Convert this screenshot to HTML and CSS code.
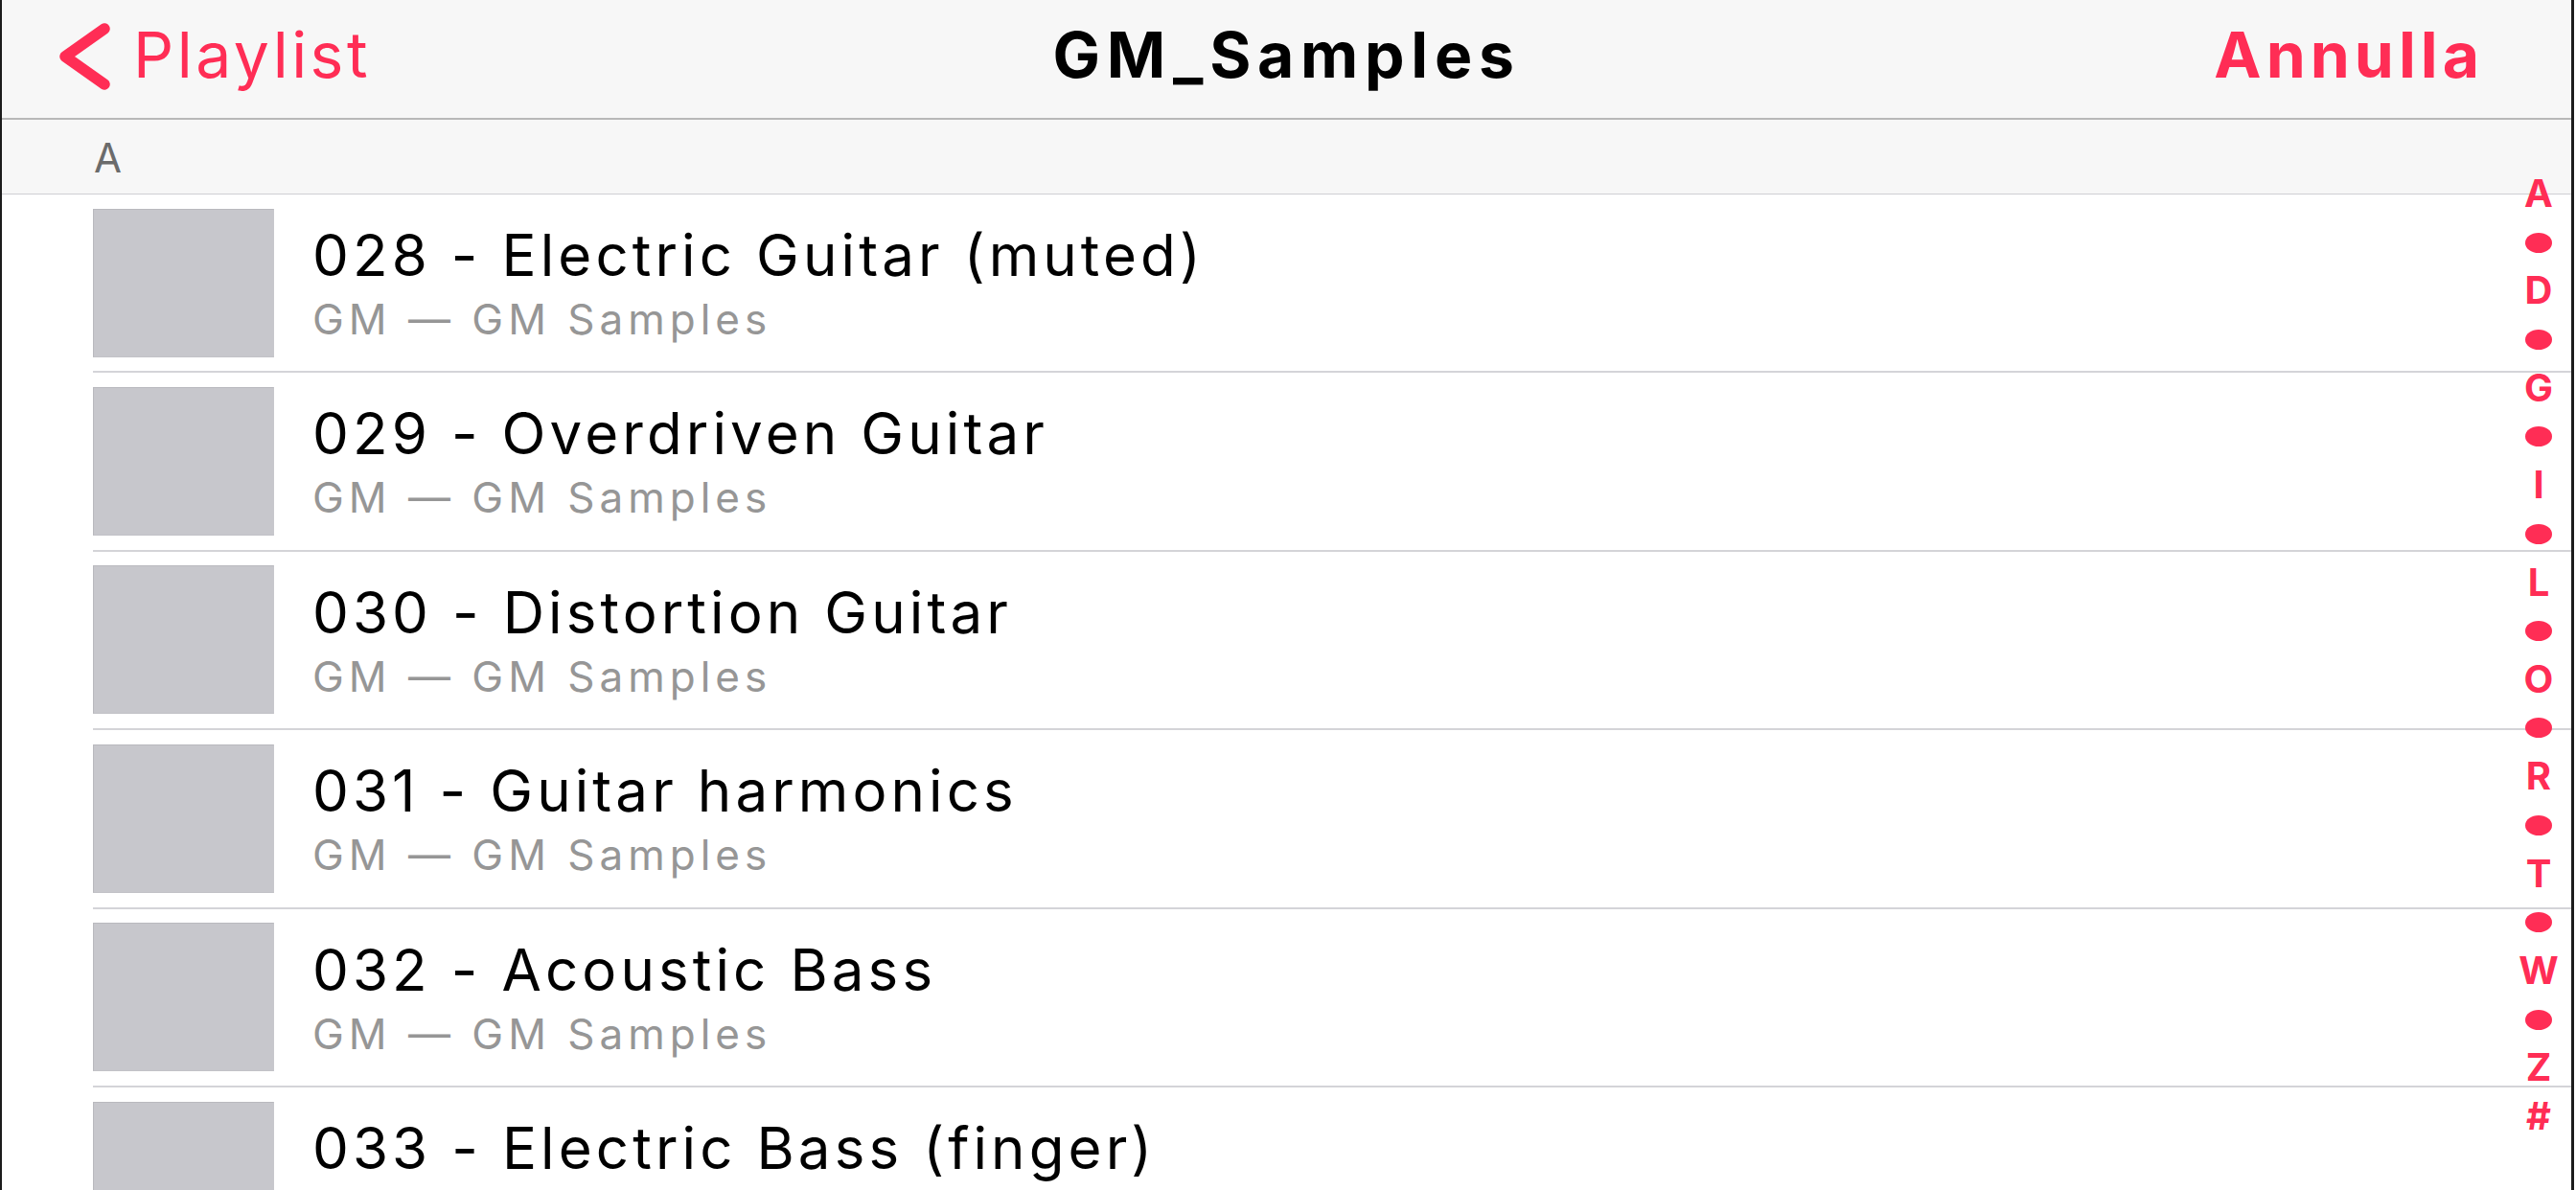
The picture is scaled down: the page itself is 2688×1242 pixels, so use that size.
FILE: index.html
```html
<!DOCTYPE html>
<html lang="it">
<head>
    <meta charset="UTF-8">
    <meta name="viewport" content="width=device-width, initial-scale=1.0">
    <title>GM_Samples</title>
    <link rel="stylesheet" href="styles.css">
</head>
<body>

    <div class="screen">
        <header class="navbar">
            <a class="nav-back" href="#">
                <svg class="chevron" viewBox="0 0 60 72" width="60" height="72">
                    <path d="M49 7 L8 36 L49 65" />
                </svg>
                <span>Playlist</span>
            </a>
            <h1 class="nav-title">GM_Samples</h1>
            <a class="nav-action" href="#">Annulla</a>
        </header>

        <div class="list-wrap">
            <div class="section-header">A</div>

            <ul class="tracks">
                <li class="track">
                    <div class="track-body">
                        <div class="artwork"></div>
                        <div class="track-text">
                            <div class="track-title">028 - Electric Guitar (muted)</div>
                            <div class="track-sub">GM — GM Samples</div>
                        </div>
                    </div>
                </li>
                <li class="track">
                    <div class="track-body">
                        <div class="artwork"></div>
                        <div class="track-text">
                            <div class="track-title">029 - Overdriven Guitar</div>
                            <div class="track-sub">GM — GM Samples</div>
                        </div>
                    </div>
                </li>
                <li class="track">
                    <div class="track-body">
                        <div class="artwork"></div>
                        <div class="track-text">
                            <div class="track-title">030 - Distortion Guitar</div>
                            <div class="track-sub">GM — GM Samples</div>
                        </div>
                    </div>
                </li>
                <li class="track">
                    <div class="track-body">
                        <div class="artwork"></div>
                        <div class="track-text">
                            <div class="track-title">031 - Guitar harmonics</div>
                            <div class="track-sub">GM — GM Samples</div>
                        </div>
                    </div>
                </li>
                <li class="track">
                    <div class="track-body">
                        <div class="artwork"></div>
                        <div class="track-text">
                            <div class="track-title">032 - Acoustic Bass</div>
                            <div class="track-sub">GM — GM Samples</div>
                        </div>
                    </div>
                </li>
                <li class="track">
                    <div class="track-body">
                        <div class="artwork"></div>
                        <div class="track-text">
                            <div class="track-title">033 - Electric Bass (finger)</div>
                            <div class="track-sub">GM — GM Samples</div>
                        </div>
                    </div>
                </li>
            </ul>

            <!-- indice alfabetico laterale -->
            <nav class="index">
                <span>A</span><i class="dot"></i>
                <span>D</span><i class="dot"></i>
                <span>G</span><i class="dot"></i>
                <span>I</span><i class="dot"></i>
                <span>L</span><i class="dot"></i>
                <span>O</span><i class="dot"></i>
                <span>R</span><i class="dot"></i>
                <span>T</span><i class="dot"></i>
                <span>W</span><i class="dot"></i>
                <span>Z</span>
                <span>#</span>
            </nav>
        </div>
    </div>

</body>
</html>
```

FILE: styles.css
```css
* {
    box-sizing: border-box;
}
html, body {
    margin: 0;
    padding: 0;
    background-color: #ffffff;
}
body {
    font-family: Inter, "Liberation Sans", sans-serif;
    overflow: hidden;
}
.screen {
    width: 2686px;
    height: 1242px;
    border-left: 2px solid #1c1c1c;
    border-right: 3px solid #1c1c1c;
    overflow: hidden;
    background-color: #ffffff;
}

/* barra di navigazione */
.navbar {
    display: grid;
    grid-template-columns: 1fr auto 1fr;
    align-items: center;
    height: 125px;
    padding: 0 58px 10px 58px;
    background-color: #f7f7f7;
    border-bottom: 2px solid #b8b8b8;
}
.navbar a {
    color: #ff2d55;
    text-decoration: none;
}
.nav-back {
    display: flex;
    align-items: center;
    gap: 19px;
    font-size: 66px;
    letter-spacing: 3.5px;
}
.chevron {
    margin-top: 4px;
    fill: none;
    stroke: #ff2d55;
    stroke-width: 11.5;
    stroke-linecap: round;
    stroke-linejoin: round;
}
.nav-title {
    margin: 0;
    font-size: 66px;
    font-weight: 700;
    letter-spacing: 6.7px;
    color: #000000;
}
.nav-action {
    justify-self: end;
    margin-right: 33px;
    font-size: 66px;
    font-weight: 700;
    letter-spacing: 5px;
}

.list-wrap {
    position: relative;
}
.section-header {
    height: 78px;
    padding: 14px 0 0 96px;
    font-size: 42px;
    letter-spacing: 1px;
    color: #6b6b6b;
    background-color: #f7f7f7;
    border-bottom: 1px solid #cfcfd3;
}

/* elenco brani */
.tracks {
    list-style: none;
    margin: 0;
    padding: 0;
}
.track {
    padding-left: 95px;
}
.track-body {
    display: flex;
    align-items: center;
    height: 186.4px;
    border-bottom: 2px solid #d4d4d8;
}
.artwork {
    width: 189px;
    height: 155px;
    flex-shrink: 0;
    background-color: #c7c7cc;
    border: 1px solid #b9b9be;
    border-right-color: #c7c7cc;
    border-bottom-color: #c2c2c7;
}
.track-text {
    align-self: flex-start;
    padding: 28px 0 0 40px;
}
.track-title {
    font-size: 60px;
    line-height: 70px;
    letter-spacing: 4.1px;
    color: #000000;
}
.track-sub {
    margin-top: 8px;
    font-size: 44px;
    line-height: 48px;
    letter-spacing: 5px;
    color: #969696;
}

/* indice alfabetico */
.index {
    position: absolute;
    top: 52px;
    right: 8px;
    width: 52px;
    display: flex;
    flex-direction: column;
    align-items: center;
    color: #ff2d55;
    font-size: 40px;
    font-weight: 700;
}
.index span {
    height: 50.7px;
    line-height: 50.7px;
}
.index .dot {
    display: block;
    width: 28px;
    height: 21px;
    margin: 14.85px 0;
    border-radius: 50%;
    background-color: #ff2d55;
}
```
